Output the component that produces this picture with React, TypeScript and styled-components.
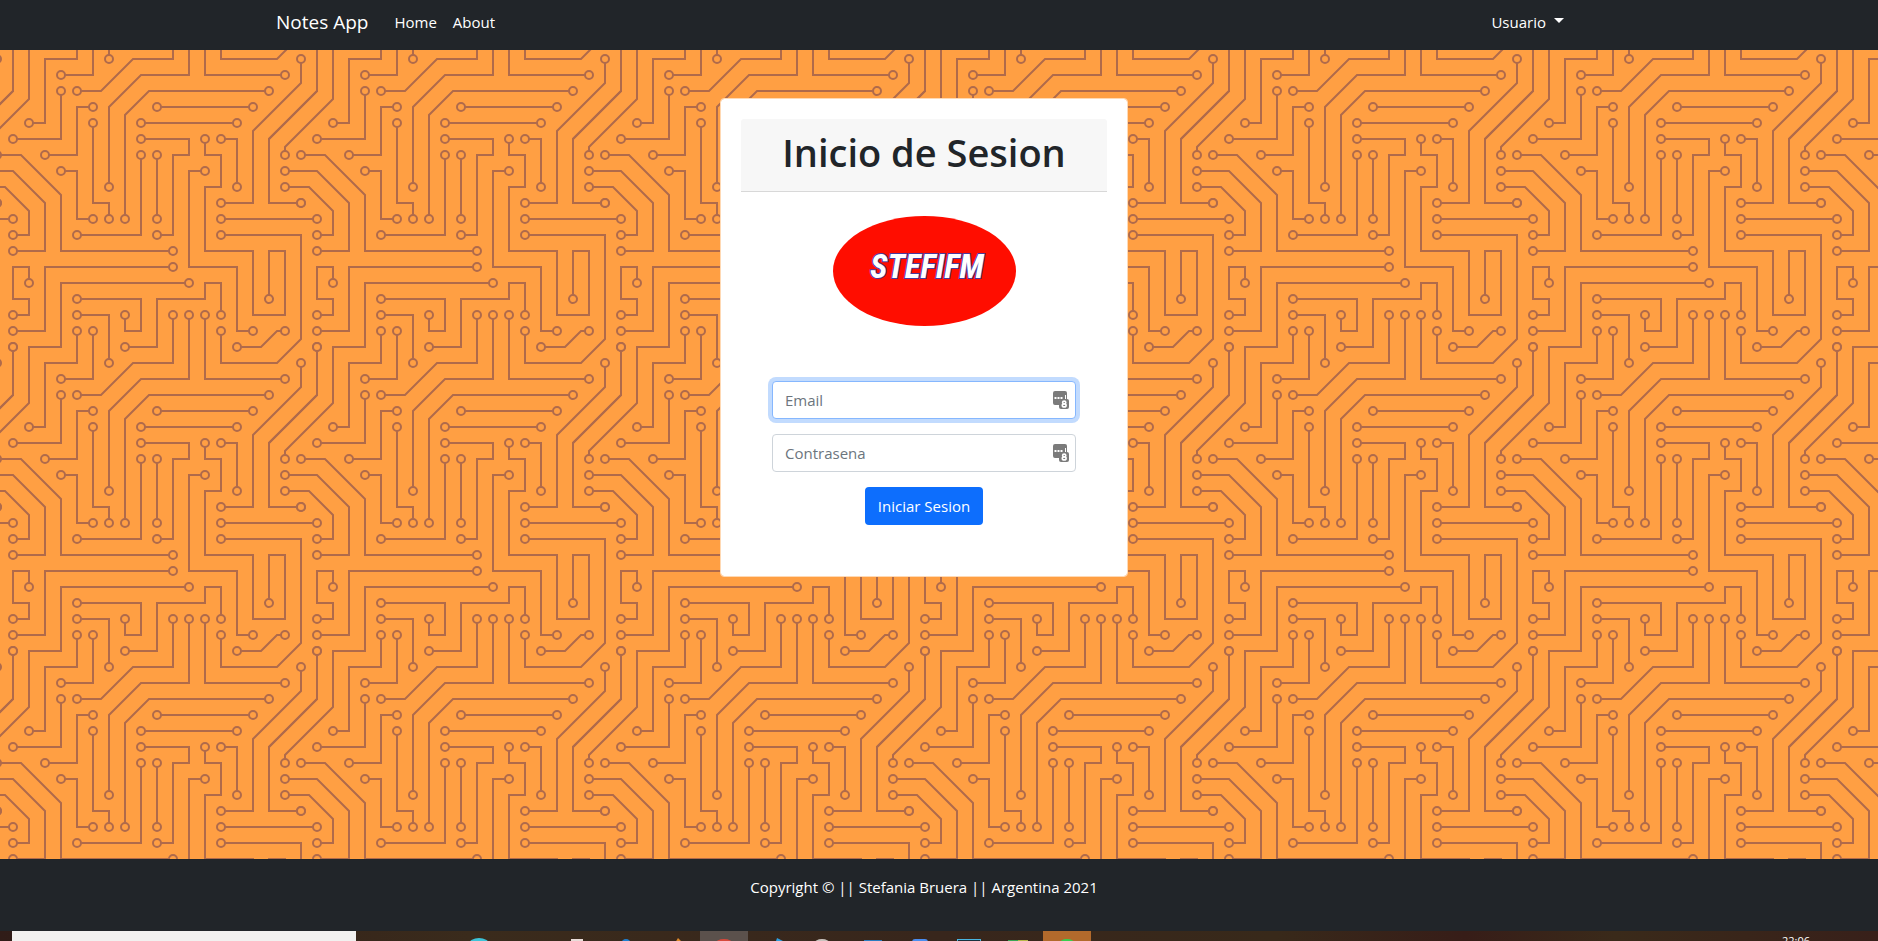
import React from 'react';
import styled, { createGlobalStyle, css } from 'styled-components';

/* ---------- circuit board background ---------- */

const TILE = 304;
const STEP = 16;
const BOARD = '#ff9f43';
const TRACE = '#b06a4a';

type Point = [number, number];

// Each wire is a list of grid points with a solder pad on both ends.
// Wires may run past the tile edge; the tile is drawn again one period back to wrap them.
const wires: Point[][] = [
  [[16, 14], [22, 14]],
  [[13, 17], [5, 17], [5, 21], [3, 21]],
  [[16, 15], [21, 15], [21, 21.5], [19.5, 23], [16, 23], [16, 21]],
  [[11, 8], [17, 8]],
  [[15, 1], [15, 5], [20, 5]],
  [[12, 7], [18, 7]],
  [[16, 20], [16, 18], [15, 18], [15, 19], [12, 19], [12, 22], [10, 22]],
  [[12, 14], [12, 10]],
  [[8, 8], [8, 13], [9, 13], [9, 14]],
  [[8, 7], [7, 7], [7, 10], [5, 10]],
  [[7, 15], [11, 15], [11, 10]],
  [[6, 11], [7, 11], [7, 14], [8, 14]],
  [[4, 18], [4, 17], [3, 17], [3, 19], [4, 19], [4, 20], [3, 20]],
  [[15, 11], [14, 11], [14, 17], [17, 17], [17, 21], [18, 21]],
  [[16, 9], [17, 9], [17, 12]],
  [[12, 15], [13, 15], [13, 10], [14, 10], [14, 9], [11, 9]],
  [[6, 6], [6, 9], [3, 9]],
  [[7, 2], [7, 4], [5, 4], [5, 8], [4, 8]],
  [[6, 5], [8, 5], [8, 2]],
  [[7, 1], [9, 1], [9, 4]],
  [[14, 18], [6, 18], [6, 22], [4, 22], [4, 25.5], [1, 28.5], [1, 29]],
  [[15, 9], [15, 10], [16, 10], [16, 12], [15, 12], [15, 16], [18, 16], [18, 20], [20, 20], [20, 16], [19, 16], [19, 19]],
  [[7, 19], [11, 19], [11, 21], [10, 21], [10, 20]],
  [[7, 6], [8.5, 6], [10.5, 4], [13, 4], [13, 1]],
  [[9, 12], [9, 7], [11, 5], [14, 5], [14, 1]],
  [[10, 14], [10, 7.5], [11.5, 6], [19, 6]],
  [[3, 3], [3, 6], [0, 9], [0, 13], [2, 13]],
  [[22, 3], [22, 6], [19, 9], [19, 13], [21, 13]],
  [[21, 4], [21, 5.5], [18, 8.5], [18, 13], [16, 13]],
  [[20, 2], [19.5, 2], [18.5, 3], [17, 3]],
  [[3, 15], [4, 15], [4, 13.5], [2.5, 12], [1, 12]],
  [[13, 16], [6, 16], [6, 12.5], [3.5, 10], [2, 10]],
  [[3, 16], [5, 16], [5, 13], [3, 11], [1, 11]],
];

const px = (n: number) => n * STEP + 1;

const drawWire = (points: Point[]) => {
  const line = points.map(([x, y]) => `${px(x)},${px(y)}`).join(' ');
  const pads = [points[0], points[points.length - 1]]
    .map(([x, y]) => `<circle cx='${px(x)}' cy='${px(y)}' r='4' fill='${BOARD}'/>`)
    .join('');
  return `<polyline points='${line}'/>${pads}`;
};

const boardTile = () => {
  const wiresMarkup = wires.map(drawWire).join('');
  const copies = [0, -TILE]
    .flatMap((x) => [0, -TILE].map((y) => `<g transform='translate(${x} ${y})'>${wiresMarkup}</g>`))
    .join('');
  const svg = `<svg xmlns='http://www.w3.org/2000/svg' width='${TILE}' height='${TILE}' viewBox='0 0 ${TILE} ${TILE}'><g fill='none' stroke='${TRACE}' stroke-width='2'>${copies}</g></svg>`;
  return `url("data:image/svg+xml,${encodeURIComponent(svg).replace(/'/g, '%27')}")`;
};

/* ---------- styles ---------- */

const GlobalStyle = createGlobalStyle`
  *, *::before, *::after { box-sizing: border-box; }
  body {
    margin: 0;
    font-family: 'Segoe UI', 'Open Sans', 'Noto Sans', sans-serif;
    font-size: 15px;
    line-height: 24px;
    color: #212529;
    background: #212529;
  }
`;

const Page = styled.div`
  display: flex;
  flex-direction: column;
  min-height: 100vh;
`;

const gutter = css`
  padding-right: 30px;
`;

const Navbar = styled.nav`
  ${gutter}
  background: #212529;
`;

const NavInner = styled.div`
  display: flex;
  align-items: center;
  max-width: 1320px;
  height: 50px;
  margin: 0 auto;
  padding: 0 12px 6px;
`;

const Brand = styled.a`
  margin-right: 26px;
  font-size: 19px;
  line-height: 30px;
  color: #fff;
  text-decoration: none;
`;

const NavList = styled.div`
  display: flex;
  flex: 1;
  gap: 16px;
`;

const NavLink = styled.a`
  color: #fff;
  text-decoration: none;
`;

const UserMenu = styled.button`
  display: flex;
  align-items: center;
  gap: 8px;
  padding: 0 8px;
  border: 0;
  background: none;
  color: #fff;
  font: inherit;
  cursor: pointer;

  &::after {
    content: '';
    margin-bottom: 3px;
    border-top: 5px solid;
    border-right: 5px solid transparent;
    border-left: 5px solid transparent;
  }
`;

const Board = styled.main`
  ${gutter}
  display: flex;
  flex: 1;
  justify-content: center;
  align-items: flex-start;
  padding-top: 48px;
  padding-bottom: 48px;
  background: ${BOARD} ${boardTile()} -36px -56px;
`;

const Card = styled.section`
  width: 408px;
  max-width: 100%;
  padding: 20px;
  border: 1px solid #ffd9b4;
  border-radius: 4px;
  background: #fff;
  background-clip: padding-box;
`;

const CardHeader = styled.header`
  padding: 9px 16px 15px;
  border-bottom: 1px solid #d8d8d8;
  border-radius: 3px 3px 0 0;
  background: #f7f7f7;
  text-align: center;
`;

const Title = styled.h1`
  margin: 0;
  font-size: 38px;
  font-weight: 600;
  line-height: 48px;
`;

const Logo = styled.svg`
  display: block;
  width: 50%;
  margin: 24px auto 55px;
`;

const Form = styled.form`
  display: flex;
  flex-direction: column;
  align-items: center;
  gap: 15px;
  padding: 0 31px 31px;
`;

const Field = styled.label`
  display: flex;
  align-items: center;
  width: 100%;
  height: 38px;
  padding: 0 6px 0 0;
  border: 1px solid #ced4da;
  border-radius: 4px;
  background: #fff;

  &:focus-within {
    border-color: #86b7fe;
    box-shadow: 0 0 0 4px #c2dbfe;
  }
`;

const Input = styled.input`
  flex: 1;
  min-width: 0;
  height: 36px;
  padding: 0 12px;
  border: 0;
  outline: 0;
  background: none;
  color: #212529;
  font: inherit;
  caret-color: transparent;

  &::placeholder {
    color: #6c757d;
    opacity: 1;
  }
`;

const SubmitButton = styled.button`
  height: 38px;
  padding: 0 13px;
  border: 0;
  border-radius: 4px;
  background: #0d6efd;
  color: #fff;
  font: inherit;
  cursor: pointer;
`;

const Footer = styled.footer`
  ${gutter}
  height: 72px;
  padding-top: 16px;
  background: #212529;
  color: #fff;
  text-align: center;
`;

const Taskbar = styled.div`
  display: flex;
  height: 10px;
  padding: 0 68px 0 12px;
  overflow: hidden;
  background: linear-gradient(90deg, #301c18, #3a2b1c 25%, #38261c 50%, #38291a 68%, #371d18 78%, #3a2a1a 86%, #38201a);
`;

const TaskSearch = styled.div`
  width: 344px;
  margin-right: 99px;
  background: #f2f1f0;
`;

const TaskList = styled.div`
  display: flex;
  flex: 1;
  gap: 1px;
`;

const TaskCell = styled.div<{ $bg?: string }>`
  display: flex;
  justify-content: center;
  width: 48px;
  background: ${({ $bg }) => $bg ?? 'transparent'};
`;

const Clock = styled.time`
  padding-top: 4px;
  font-size: 11px;
  line-height: 12px;
  color: #fff;
`;

/* ---------- pieces ---------- */

const PasswordManagerIcon = () => (
  <svg width="16" height="18" viewBox="0 0 16 18" aria-hidden="true">
    <path fill="#7b7b7b" d="M2 0h10a2 2 0 0 1 2 2v7H8a2 2 0 0 0-2 2v3H2a2 2 0 0 1-2-2V2a2 2 0 0 1 2-2z" />
    <rect x="6" y="8" width="10" height="10" rx="2" fill="#7b7b7b" />
    <path fill="#fff" d="M1.500 6h2v2h-2zM4.500 6h2v2h-2zM7.500 6h2v2h-2zM12 4h1v4h-1z" />
    <g fill="none" stroke="#fff" strokeWidth="1.600">
      <ellipse cx="11.200" cy="11.400" rx="1.600" ry="1.300" />
      <ellipse cx="11.200" cy="14.400" rx="1.900" ry="1.500" />
    </g>
  </svg>
);

const taskIcons: { bg?: string; art?: React.ReactNode }[] = [
  { art: <ellipse cx="24" cy="13" rx="10" ry="6" fill="#3cc3d8" /> },
  {},
  { art: <rect x="18" y="8" width="12" height="4" fill="#e8dcd8" /> },
  { art: <circle cx="24" cy="13" r="5" fill="#1f7fd0" /> },
  { art: <path d="M27 7l5 5h-8z" fill="#e08a2a" /> },
  { bg: '#5b514c', art: <ellipse cx="24" cy="13" rx="9" ry="5" fill="#d6493c" /> },
  { art: <path d="M28 7l6 3h-7z" fill="#2f9fe0" /> },
  { art: <ellipse cx="24" cy="13" rx="8" ry="5" fill="#c9c2bd" /> },
  { art: <rect x="17" y="9" width="18" height="3" fill="#2b7cc0" /> },
  { art: <rect x="16" y="8" width="16" height="6" rx="3" fill="#4a8df0" /> },
  { art: <rect x="12.500" y="8.500" width="23" height="6" fill="#17313f" stroke="#4ab5e0" /> },
  {
    art: (
      <>
        <path d="M14 9h10v3H14z" fill="#3aa655" />
        <path d="M24 9h10v3H24z" fill="#b5b648" />
      </>
    ),
  },
  { bg: '#b26a2c', art: <ellipse cx="24" cy="13" rx="8" ry="5" fill="#35d04f" /> },
];

export default function App() {
  return (
    <Page>
      <GlobalStyle />
      <Navbar>
        <NavInner>
          <Brand href="#">Notes App</Brand>
          <NavList>
            <NavLink href="#home">Home</NavLink>
            <NavLink href="#about">About</NavLink>
          </NavList>
          <UserMenu type="button">Usuario</UserMenu>
        </NavInner>
      </Navbar>

      <Board>
        <Card>
          <CardHeader>
            <Title>Inicio de Sesion</Title>
          </CardHeader>
          <Logo viewBox="0 0 183 110" role="img" aria-label="STEFIFM">
            <ellipse cx="91.500" cy="55" rx="91.500" ry="55" fill="#ff0d00" />
            <text
              x="94"
              y="62"
              textAnchor="middle"
              fontFamily="'Roboto Condensed', Roboto, sans-serif"
              fontSize="33"
              fontWeight="700"
              fontStyle="italic"
              fill="#fff"
              stroke="#4a3a9c"
              strokeWidth="2"
              paintOrder="stroke"
            >
              STEFIFM
            </text>
          </Logo>
          <Form onSubmit={(e) => e.preventDefault()}>
            <Field>
              <Input type="email" placeholder="Email" aria-label="Email" autoFocus />
              <PasswordManagerIcon />
            </Field>
            <Field>
              <Input type="password" placeholder="Contrasena" aria-label="Contrasena" />
              <PasswordManagerIcon />
            </Field>
            <SubmitButton type="submit">Iniciar Sesion</SubmitButton>
          </Form>
        </Card>
      </Board>

      <Footer>Copyright © || Stefania Bruera || Argentina 2021</Footer>

      <Taskbar>
        <TaskSearch />
        <TaskList>
          {taskIcons.map(({ bg, art }, i) => (
            <TaskCell key={i} $bg={bg}>
              <svg width="48" height="10" viewBox="0 0 48 10" aria-hidden="true">{art}</svg>
            </TaskCell>
          ))}
        </TaskList>
        <Clock>22:06</Clock>
      </Taskbar>
    </Page>
  );
}
